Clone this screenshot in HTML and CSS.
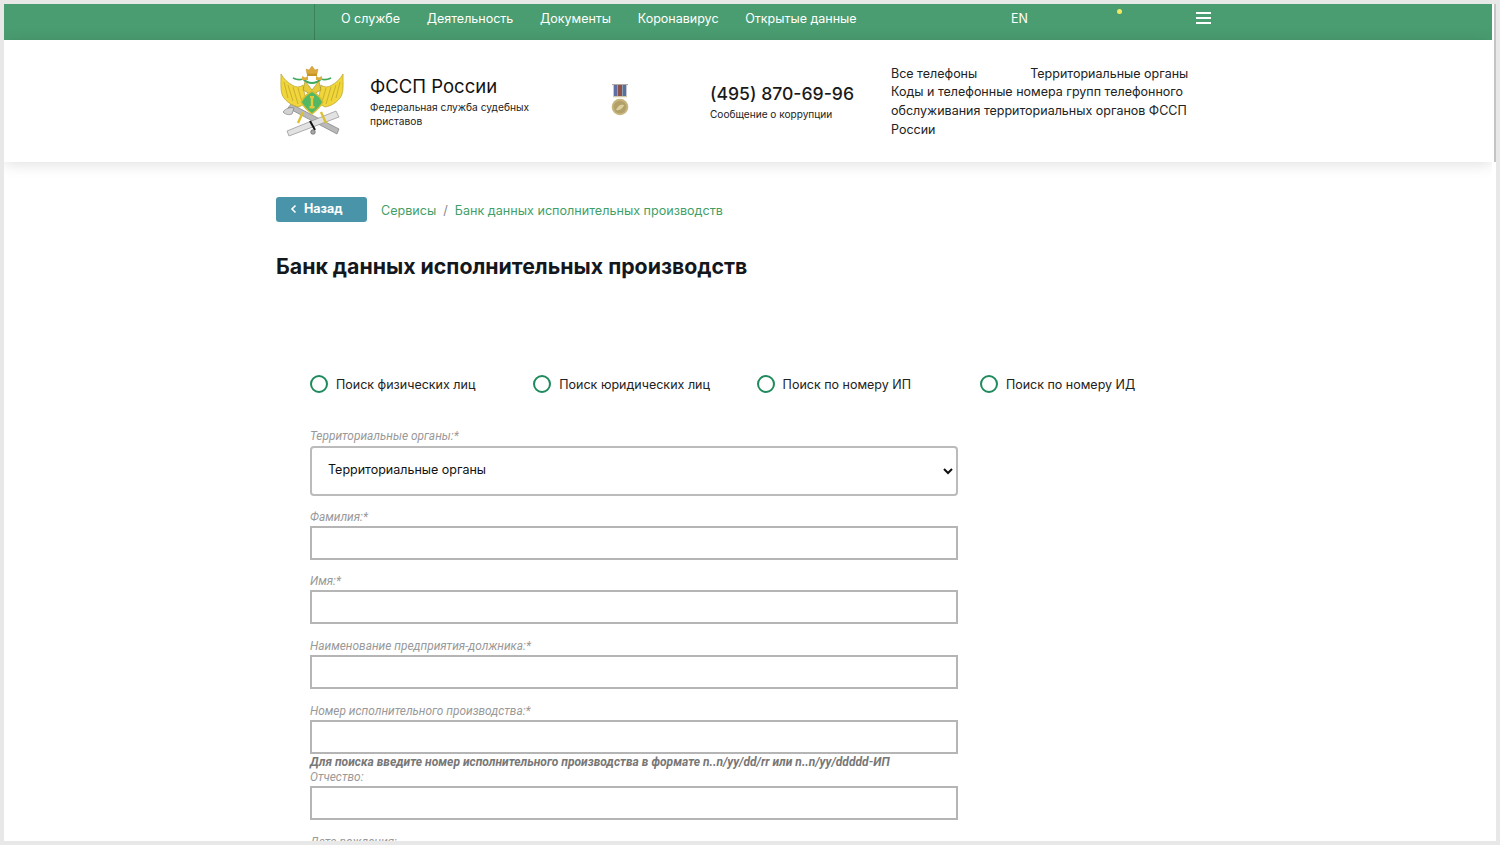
FILE: index.html
```html
<!DOCTYPE html>
<html lang="ru">
<head>
<meta charset="utf-8">
<title>Банк данных исполнительных производств</title>
<link rel="stylesheet" href="styles.css">
</head>
<body>
<div class="window">
  <div class="page">
    <div class="topbar">
      <div class="topbar-divider"></div>
      <nav class="topnav">
        <a>О службе</a><a>Деятельность</a><a>Документы</a><a>Коронавирус</a><a>Открытые данные</a>
      </nav>
      <a class="lang">EN</a>
      <span class="dot"></span>
      <span class="burger"><i></i><i></i><i></i></span>
    </div>
    <header class="header">
      <svg class="emblem" viewBox="0 0 72 72" width="72" height="72" aria-hidden="true">
        <!-- scrolls and axe behind the eagle -->
        <path d="M12 43 L15 39 L63 64 L61 69 Z" fill="#b9b9b9" stroke="#7f7f7f" stroke-width=".7"/>
        <path d="M11 66 L60 46 L63 52 L13 71 Z" fill="#e2e2e2" stroke="#8f8f8f" stroke-width=".7"/>
        <path d="M7 47 C10 43 14 42 18 43 L16 49 C13 50 10 50 7 47Z" fill="#d2d2d2" stroke="#6f6f6f" stroke-width=".6"/>
        <!-- wings -->
        <path d="M5 9 C5 20 4 28 8 33 C12 38 17 41 23 42 L30 38 L27 20 C23 23 19 22 16 20 C11 17 8 14 5 9Z" fill="#f0d63a" stroke="#b7a02a" stroke-width=".7"/>
        <path d="M67 9 C67 20 68 28 64 33 C60 38 55 41 49 42 L42 38 L45 20 C49 23 53 22 56 20 C61 17 64 14 67 9Z" fill="#f0d63a" stroke="#b7a02a" stroke-width=".7"/>
        <path d="M8 17 L12 33 M12 20 L17 36 M17 22 L22 39 M22 23 L26 37 M64 17 L60 33 M60 20 L55 36 M55 22 L50 39 M50 23 L46 37" stroke="#c4ab2c" stroke-width=".9" fill="none"/>
        <!-- ribbons -->
        <path d="M17 13 C21 15 24 15 27 14 C30 17 33 18 36 18 C39 18 42 17 45 14 C48 15 51 15 55 13" stroke="#3fa85c" stroke-width="1.800" fill="none"/>
        <!-- crowns -->
        <path d="M31 9 L30 4 L33 5 L36 1 L39 5 L42 4 L41 9 Z" fill="#dca83a" stroke="#b98a26" stroke-width=".4"/>
        <rect x="31" y="9" width="10" height="2" fill="#c99522"/>
        <path d="M26 15 L26 11 L29 12.500 L32 11 L32 15Z" fill="#dcae3d"/>
        <path d="M40 15 L40 11 L43 12.500 L46 11 L46 15Z" fill="#dcae3d"/>
        <!-- necks -->
        <path d="M29 16 C32 20 34 22 36 25 C38 22 40 20 43 16 L45 25 L36 30 L27 25Z" fill="#e6cb3a" stroke="#8d7d20" stroke-width=".5"/>
        <!-- shield -->
        <path d="M36 26 C41 29 45 33 47 37 C45 41 41 45 36 49 C31 45 27 41 25 37 C27 33 31 29 36 26Z" fill="#52b863" stroke="#dcbf33" stroke-width="1.500"/>
        <path d="M34 31 H38 V33 H37.200 V41 H38.500 V43.500 H33.500 V41 H34.800 V33 H34Z" fill="#e6c83c"/>
        <!-- legs and sword -->
        <path d="M27 47 L22 58 M45 47 L50 58" stroke="#dcc033" stroke-width="2.400"/>
        <path d="M34 56 L39 65" stroke="#141414" stroke-width="2"/>
        <circle cx="37" cy="67" r="2.300" fill="#a6a6a6" stroke="#555" stroke-width=".6"/>
      </svg>
      <div class="brand">
        <div class="brand-name">ФССП России</div>
        <div class="brand-sub">Федеральная служба судебных приставов</div>
      </div>
      <svg class="medal" viewBox="0 0 18 34" width="18" height="34" aria-hidden="true">
        <rect x="1" y="2" width="16" height="1.200" fill="#b5aaa2"/>
        <rect x="2" y="3" width="14" height="11" fill="#c9c6d0"/>
        <rect x="3" y="3" width="3.500" height="11" fill="#5f6fa6"/>
        <rect x="7" y="3" width="4" height="11" fill="#8c5248"/>
        <rect x="11.500" y="3" width="3.500" height="11" fill="#56739f"/>
        <rect x="2" y="14" width="14" height="1.300" fill="#d3cba8"/>
        <circle cx="9" cy="25" r="8.300" fill="#c6b57c"/>
        <circle cx="9" cy="25" r="6.300" fill="#b3a069"/>
        <path d="M5 28 C7 23 10 22 13 23 C12 26 9 29 5 28Z" fill="#dcd09c"/>
      </svg>
      <div class="contact">
        <div class="phone">(495) 870-69-96</div>
        <div class="phone-sub">Сообщение о коррупции</div>
      </div>
      <div class="links">
        <div class="links-row"><a>Все телефоны</a><a>Территориальные органы</a></div>
        <a>Коды и телефонные номера групп телефонного обслуживания территориальных органов ФССП России</a>
      </div>
    </header>
    <main class="main">
      <div class="crumbs">
        <a class="back"><svg viewBox="0 0 8 10" width="8" height="10" aria-hidden="true"><path d="M5.500 1.500 L2 5 L5.500 8.500" fill="none" stroke="#fff" stroke-width="1.600"/></svg>Назад</a>
        <a class="crumb">Сервисы</a><span class="sep">/</span><a class="crumb">Банк данных исполнительных производств</a>
      </div>
      <h1 class="title">Банк данных исполнительных производств</h1>
      <form class="form">
        <div class="radios">
          <label class="radio"><span class="circle"></span>Поиск физических лиц</label>
          <label class="radio"><span class="circle"></span>Поиск юридических лиц</label>
          <label class="radio"><span class="circle"></span>Поиск по номеру ИП</label>
          <label class="radio"><span class="circle"></span>Поиск по номеру ИД</label>
        </div>
        <div class="fields">
          <div class="field field-select">
            <label class="lbl">Территориальные органы:*</label>
            <select class="select"><option>Территориальные органы</option></select>
          </div>
          <div class="field">
            <label class="lbl">Фамилия:*</label>
            <input class="input" type="text">
          </div>
          <div class="field">
            <label class="lbl">Имя:*</label>
            <input class="input" type="text">
          </div>
          <div class="field">
            <label class="lbl">Наименование предприятия-должника:*</label>
            <input class="input" type="text">
          </div>
          <div class="field">
            <label class="lbl">Номер исполнительного производства:*</label>
            <input class="input" type="text">
            <div class="hint">Для поиска введите номер исполнительного производства в формате n..n/yy/dd/rr или n..n/yy/ddddd-ИП</div>
          </div>
          <div class="field">
            <label class="lbl">Отчество:</label>
            <input class="input" type="text">
          </div>
          <div class="field">
            <label class="lbl">Дата рождения:</label>
          </div>
        </div>
      </form>
    </main>
  </div>
  <div class="scrollbar"><span class="thumb"></span></div>
</div>
</body>
</html>
```

FILE: styles.css
```css
* { box-sizing: border-box; }
html, body { margin: 0; height: 100%; overflow: hidden; }
body {
  background: #e8e8e8;
  padding: 4px;
  font-family: Inter, Roboto, sans-serif;
  color: #1b1b1b;
}
.window {
  display: flex;
  height: 837px;
  width: 1492px;
  background: #fff;
  overflow: hidden;
}
.page { width: 1488px; flex: none; overflow: hidden; }
.scrollbar { width: 4px; flex: none; background: #fff; padding-left: 2px; }
.thumb { display: block; width: 2px; height: 158px; background: #c4c4c4; }

.topbar {
  position: relative;
  display: flex;
  align-items: center;
  height: 36px;
  padding: 0 0 7px 310px;
  background: #4a9d70;
  color: #fff;
}
.topbar-divider {
  position: absolute;
  left: 310px; top: 0; bottom: 0;
  width: 1px;
  background: #3b8159;
}
.topnav { display: flex; gap: 26.700px; padding-left: 27px; width: 697px; font-size: 12.500px; }
.lang { font-size: 12.500px; }
.dot {
  position: absolute;
  left: 1113px; top: 5px;
  width: 5px; height: 5px;
  border-radius: 50%;
  background: #f2ea5e;
}
.burger {
  position: absolute;
  left: 1192px; top: 8px;
  display: flex; flex-direction: column; gap: 3px;
  width: 15px;
}
.burger i { display: block; height: 2px; background: #fff; }

.header {
  position: relative;
  display: flex;
  align-items: flex-start;
  height: 122px;
  padding-left: 272px;
  background: #fff;
  box-shadow: 0 2px 14px rgba(0,0,0,.13);
}
.emblem { flex: none; margin-top: 25px; }
.brand { width: 170px; margin: 34px 0 0 22px; }
.brand-name { font-size: 18.500px; line-height: 24px; color: #111; }
.brand-sub { margin-top: 2px; font-size: 10.200px; line-height: 14px; color: #222; }
.medal { flex: none; margin: 42px 0 0 71px; }
.contact { flex: none; width: 181px; margin: 41px 0 0 81px; }
.phone { font-size: 17.600px; line-height: 25px; font-weight: 500; color: #1a1a1a; }
.phone-sub { margin-top: 1px; font-size: 10.100px; line-height: 14px; color: #222; }
.links { width: 300px; margin-top: 24.500px; font-size: 12.500px; line-height: 18.800px; color: #222; }
.links-row { display: flex; gap: 53px; white-space: nowrap; }

.main { padding: 35px 0 0 272px; }
.crumbs { display: flex; align-items: center; height: 25px; font-size: 12.600px; }
.back {
  display: flex; align-items: center; gap: 6px;
  width: 91px; height: 25px;
  padding: 0 0 2px 14px;
  margin-right: 14px;
  border-radius: 3px;
  background: #4a94aa;
  color: #fff;
  font-size: 12.500px;
  font-weight: 700;
}
.crumb { color: #3f9f69; position: relative; top: 1px; }
.sep { margin: 0 7px; color: #888; position: relative; top: 1px; }
.title { margin: 31px 0 0; font-size: 21.300px; line-height: 26px; font-weight: 700; color: #14181c; }

.form { padding: 96px 0 0 34px; }
.radios { display: grid; grid-template-columns: repeat(4, 223.300px); height: 18px; }
.radio { display: flex; align-items: center; gap: 8px; font-size: 12.500px; color: #222; }
.circle { flex: none; width: 18px; height: 18px; border: 2px solid #1f8a5c; border-radius: 50%; background: #fff; }
.fields { width: 648px; margin-top: 35px; }
.field { margin-top: 13.700px; }
.field-select { margin-top: 0; }
.lbl { display: block; font-family: Roboto, sans-serif; font-size: 11.900px; line-height: 16px; font-style: italic; color: #999; margin-bottom: 1px; }
.select {
  display: block; width: 648px; height: 50px;
  margin: 2px 0 -1px;
  padding: 0 12px 3px;
  border: 2px solid #bbb; border-radius: 4px;
  background: #fff;
  font: 12.500px Inter, Roboto, sans-serif;
  color: #111;
}
.input { display: block; width: 648px; height: 34px; border: 2px solid #b5b5b5; border-radius: 0; background: #fff; }
.hint { margin: 1px 0 -14px; font-family: Roboto, sans-serif; font-size: 12px; line-height: 15px; font-style: italic; font-weight: 700; color: #777; letter-spacing: .03px; white-space: nowrap; }
```
